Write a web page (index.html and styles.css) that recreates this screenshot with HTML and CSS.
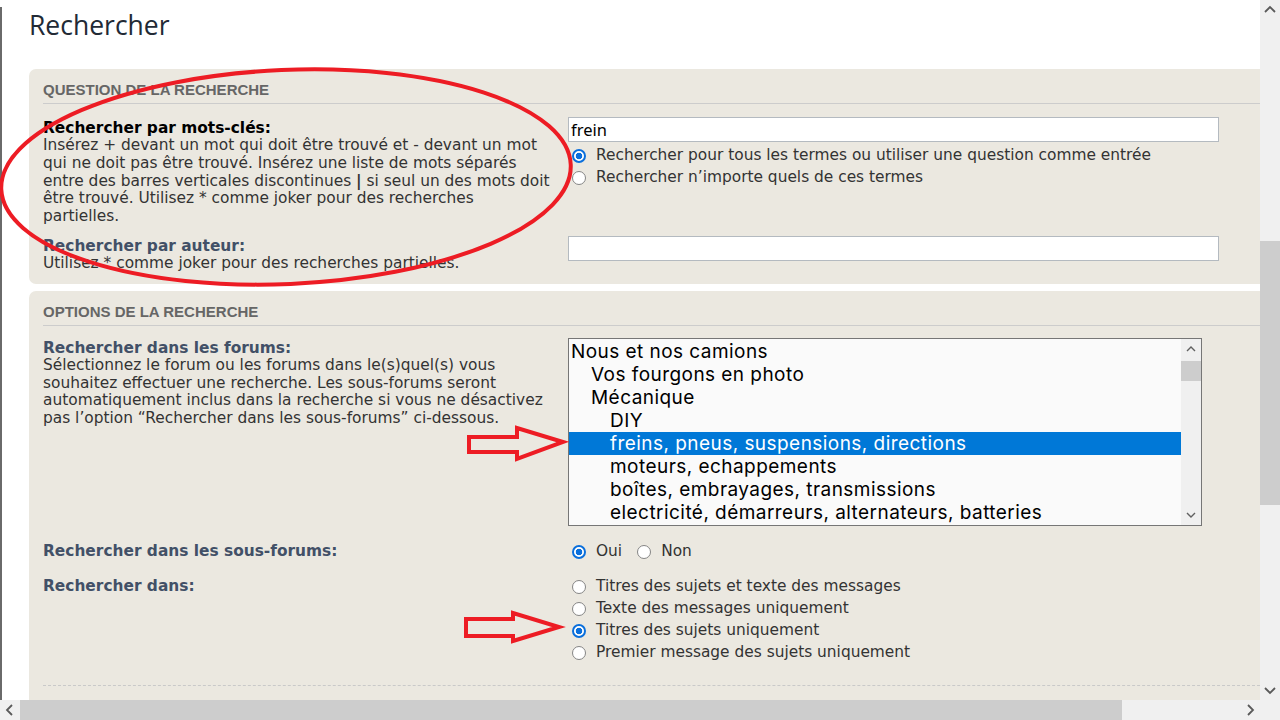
FILE: index.html
```html
<!DOCTYPE html>
<html lang="fr">
<head>
<meta charset="utf-8">
<title>Rechercher</title>
<link rel="stylesheet" href="styles.css">
</head>
<body>
<div class="screen">
  <div class="viewport">
    <div class="page">
      <h2 class="title">Rechercher</h2>

      <div class="panel">
        <h3>Question de la recherche</h3>
        <dl class="row first gap10">
          <dt>
            <span class="lbl strong">Rechercher par mots-clés:</span>
            <span class="desc">Insérez + devant un mot qui doit être trouvé et - devant un mot<br>qui ne doit pas être trouvé. Insérez une liste de mots séparés<br>entre des barres verticales discontinues <strong>|</strong> si seul un des mots doit<br>être trouvé. Utilisez * comme joker pour des recherches<br>partielles.</span>
          </dt>
          <dd>
            <input class="field" type="text" value="frein">
            <div class="opt"><span class="radio on"></span>Rechercher pour tous les termes ou utiliser une question comme entrée</div>
            <div class="opt"><span class="radio"></span>Rechercher n’importe quels de ces termes</div>
          </dd>
        </dl>
        <dl class="row">
          <dt>
            <span class="lbl">Rechercher par auteur:</span>
            <span class="desc">Utilisez * comme joker pour des recherches partielles.</span>
          </dt>
          <dd>
            <input class="field" type="text" value="">
          </dd>
        </dl>
      </div>

      <div class="panel">
        <h3 class="tight">Options de la recherche</h3>
        <dl class="row gap15">
          <dt>
            <span class="lbl">Rechercher dans les forums:</span>
            <span class="desc">Sélectionnez le forum ou les forums dans le(s)quel(s) vous<br>souhaitez effectuer une recherche. Les sous-forums seront<br>automatiquement inclus dans la recherche si vous ne désactivez<br>pas l’option “Rechercher dans les sous-forums” ci-dessous.</span>
          </dt>
          <dd>
            <div class="select">
              <div class="options">
                <div class="option l0">Nous et nos camions</div>
                <div class="option l1">Vos fourgons en photo</div>
                <div class="option l1">Mécanique</div>
                <div class="option l2">DIY</div>
                <div class="option l2 selected">freins, pneus, suspensions, directions</div>
                <div class="option l2">moteurs, echappements</div>
                <div class="option l2">boîtes, embrayages, transmissions</div>
                <div class="option l2">electricité, démarreurs, alternateurs, batteries</div>
              </div>
              <div class="sbar">
                <svg class="sbtn" width="20" height="20" viewBox="0 0 20 20"><polyline points="6,12 10,8 14,12" fill="none" stroke="#606060" stroke-width="1.4"/></svg>
                <div class="sthumb"></div>
                <div class="strack"></div>
                <svg class="sbtn" width="20" height="20" viewBox="0 0 20 20"><polyline points="6,8 10,12 14,8" fill="none" stroke="#606060" stroke-width="1.4"/></svg>
              </div>
            </div>
          </dd>
        </dl>
        <dl class="row gap13">
          <dt>
            <span class="lbl">Rechercher dans les sous-forums:</span>
          </dt>
          <dd>
            <div class="opt inline"><span class="radio on"></span>Oui<span class="radio second"></span>Non</div>
          </dd>
        </dl>
        <dl class="row gap21">
          <dt>
            <span class="lbl">Rechercher dans:</span>
          </dt>
          <dd>
            <div class="opt"><span class="radio"></span>Titres des sujets et texte des messages</div>
            <div class="opt"><span class="radio"></span>Texte des messages uniquement</div>
            <div class="opt"><span class="radio on"></span>Titres des sujets uniquement</div>
            <div class="opt"><span class="radio"></span>Premier message des sujets uniquement</div>
          </dd>
        </dl>
        <div class="dotted"></div>
      </div>
    </div>

    <svg class="marks" width="1260" height="700" viewBox="0 0 1260 700">
      <ellipse cx="286" cy="177" rx="285" ry="107" transform="rotate(-2.5 286 177)" fill="none" stroke="#ed1c24" stroke-width="4"/>
      <polygon points="469,437 517,437 517,428 563,442 517,459 517,452 469,452" fill="none" stroke="#ed1c24" stroke-width="4" stroke-linejoin="miter"/>
      <polygon points="466,619 513,619 513,613 559,627 513,641 513,636 466,636" fill="none" stroke="#ed1c24" stroke-width="4" stroke-linejoin="miter"/>
    </svg>
  </div>

  <div class="vscroll">
    <svg class="btn" width="20" height="20" viewBox="0 0 20 20"><polyline points="5,12 10,7 15,12" fill="none" stroke="#5a5a5a" stroke-width="1.8"/></svg>
    <div class="track top"></div>
    <div class="thumb"></div>
    <div class="track"></div>
    <svg class="btn" width="20" height="20" viewBox="0 0 20 20"><polyline points="5,8 10,13 15,8" fill="none" stroke="#5a5a5a" stroke-width="1.8"/></svg>
  </div>

  <div class="hscroll">
    <svg class="btn" width="20" height="20" viewBox="0 0 20 20"><polyline points="12,5 7,10 12,15" fill="none" stroke="#5a5a5a" stroke-width="1.8"/></svg>
    <div class="hthumb"></div>
    <div class="htrack"></div>
    <svg class="btn" width="20" height="20" viewBox="0 0 20 20"><polyline points="8,5 13,10 8,15" fill="none" stroke="#5a5a5a" stroke-width="1.8"/></svg>
  </div>
  <div class="corner"></div>
</div>
</body>
</html>
```

FILE: styles.css
```css
html, body {
  margin: 0;
  padding: 0;
  background: #ffffff;
}

.screen {
  width: 1280px;
  height: 720px;
  display: grid;
  grid-template-columns: 1260px 20px;
  grid-template-rows: 700px 20px;
  overflow: hidden;
}

.viewport {
  position: relative;
  overflow: hidden;
  background: #ffffff;
}

.page {
  height: 700px;
  box-sizing: border-box;
  border-left: 2px solid #6a6a6a;
  padding-left: 27px;
  font-family: "DejaVu Sans", Verdana, sans-serif;
  font-size: 15.4px;
  line-height: 17.8px;
  color: #333333;
}

.title {
  margin: 7px 0 26px;
  font-family: "Open Sans", "Noto Sans", sans-serif;
  font-weight: normal;
  font-size: 26.5px;
  line-height: 36px;
  color: #222a35;
}

.panel {
  display: flow-root;
  background: #ebe8e0;
  border-radius: 7px;
  margin-right: -20px;
  margin-bottom: 7px;
  padding: 13px 0 0 14px;
}

.panel h3 {
  margin: 0 0 13px;
  padding-bottom: 5px;
  border-bottom: 1px solid #cccccc;
  font-family: "Liberation Sans", Arial, sans-serif;
  font-weight: bold;
  font-size: 15px;
  line-height: 16px;
  color: #666666;
  text-transform: uppercase;
}

.panel h3.tight {
  margin-bottom: 12px;
}

.row {
  display: flex;
  margin: 0 0 11px;
}

.row.gap10 { margin-bottom: 10px; }
.row.gap15 { margin-bottom: 15px; }
.row.gap13 { margin-bottom: 13px; }
.row.gap21 { margin-bottom: 21px; }

.row dt {
  flex: none;
  width: 525px;
  padding-top: 1px;
}

.row.first dt {
  padding-top: 2px;
}

.row dd {
  margin: 0;
  flex: 1;
  min-width: 0;
}

.lbl {
  display: block;
  font-weight: bold;
  line-height: 18px;
  color: #425067;
}

.lbl.strong {
  color: #000000;
}

.desc {
  display: block;
  color: #333333;
}

.field {
  display: block;
  width: 651px;
  height: 25px;
  box-sizing: border-box;
  margin: 0 0 3px;
  padding: 0 2px;
  border: 1px solid #b4bac0;
  background: #ffffff;
  font-family: "Noto Sans", "Open Sans", sans-serif;
  font-size: 16.5px;
  color: #000000;
  outline: none;
}

.opt {
  display: flex;
  align-items: center;
  height: 22px;
  white-space: nowrap;
  color: #333333;
}

.radio {
  flex: none;
  width: 14px;
  height: 14px;
  box-sizing: border-box;
  border-radius: 50%;
  border: 1.5px solid #858585;
  background: #ffffff;
  margin: 0 10px 0 4px;
}

.radio.on {
  border: 2px solid #0a6fdc;
  background: radial-gradient(circle, #0a6fdc 0 3px, #ffffff 3.6px);
}

.radio.second {
  margin-left: 15px;
}

.select {
  display: flex;
  width: 634px;
  height: 188px;
  box-sizing: border-box;
  border: 1px solid #767676;
  background: #fafafa;
}

.options {
  flex: 1;
  padding-top: 1px;
  font-family: Inter, "Noto Sans", sans-serif;
  font-size: 19px;
  letter-spacing: 0.45px;
  color: #000000;
  overflow: hidden;
}

.option {
  height: 23px;
  line-height: 23px;
  white-space: nowrap;
}

.option.l0 { padding-left: 2px; }
.option.l1 { padding-left: 22px; }
.option.l2 { padding-left: 41px; }

.option.selected {
  background: #0078d7;
  color: #ffffff;
}

.sbar {
  flex: none;
  width: 20px;
  display: flex;
  flex-direction: column;
  background: #f0f0f0;
}

.sbtn {
  display: block;
  flex: none;
}

.sthumb {
  flex: none;
  height: 20px;
  margin-top: 2px;
  background: #cdcdcd;
}

.strack {
  flex: 1;
}

.dotted {
  border-top: 1px dashed #c9c9c9;
  height: 40px;
}

.marks {
  position: absolute;
  left: 0;
  top: 0;
  pointer-events: none;
}

.vscroll {
  display: flex;
  flex-direction: column;
  background: #f0f0f0;
}

.vscroll .btn,
.hscroll .btn {
  display: block;
  flex: none;
}

.track.top {
  flex: none;
  height: 221px;
}

.thumb {
  flex: none;
  height: 264px;
  background: #cdcdcd;
}

.track {
  flex: 1;
}

.hscroll {
  display: flex;
  background: #f0f0f0;
}

.hthumb {
  flex: none;
  width: 1102px;
  background: #cdcdcd;
}

.htrack {
  flex: 1;
}

.corner {
  background: #f0f0f0;
}
```
